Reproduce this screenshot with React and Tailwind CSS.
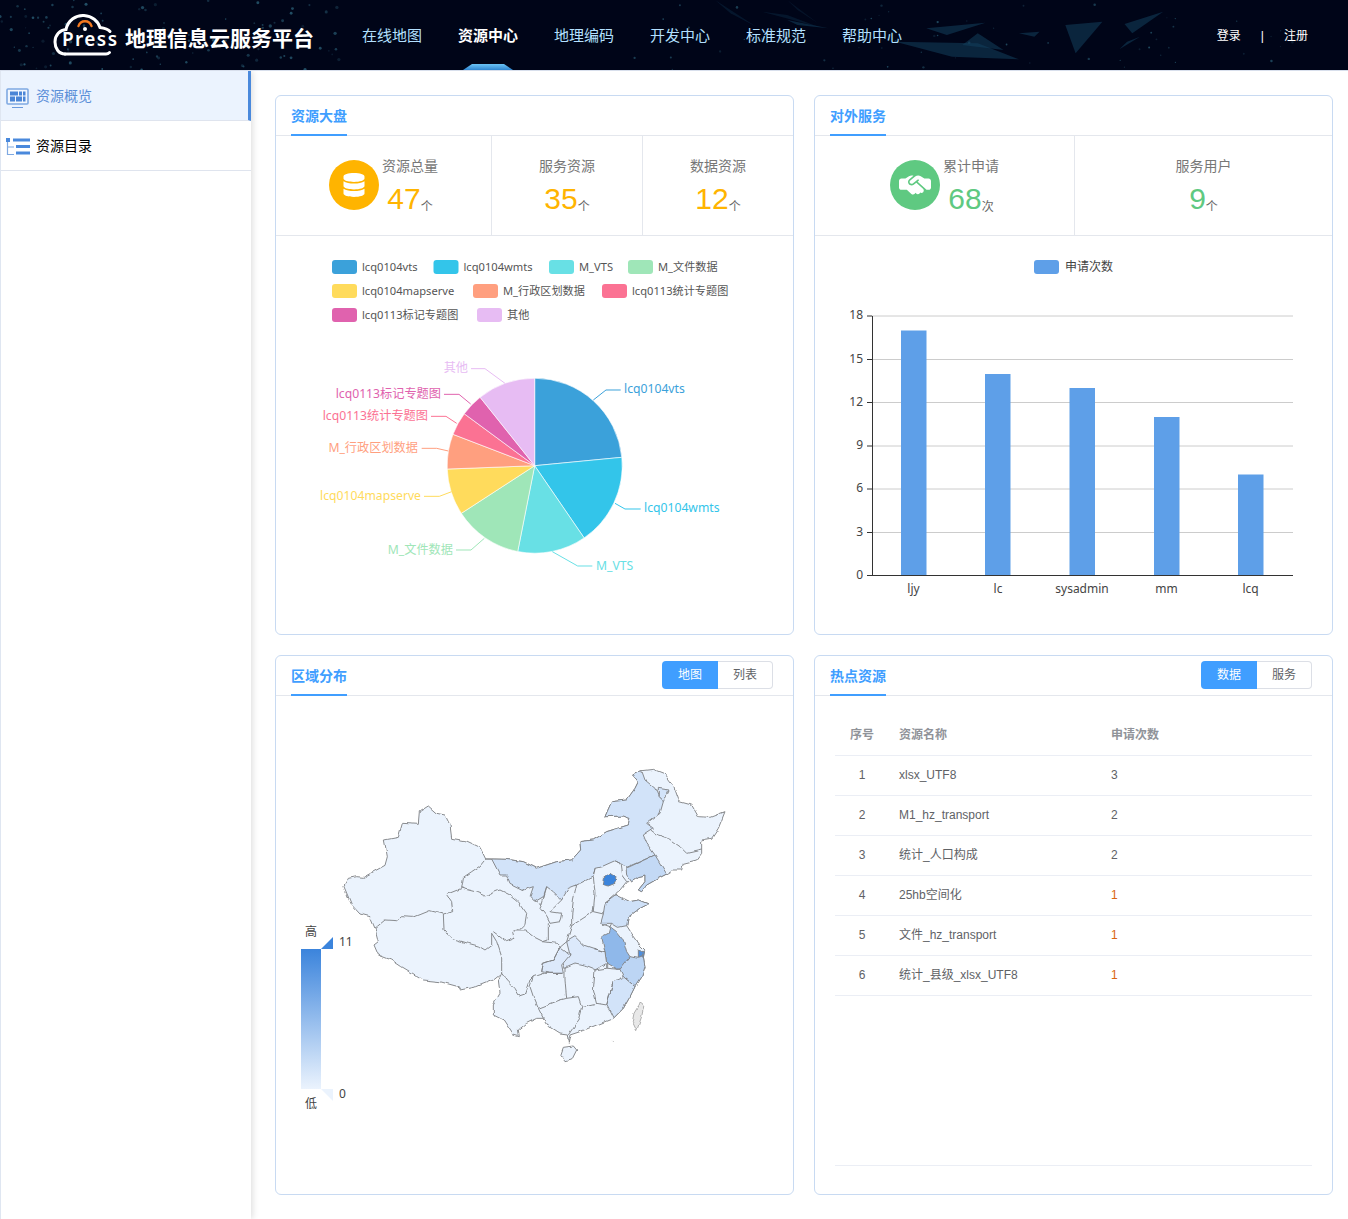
import React from 'react';
import { FaDatabase } from 'react-icons/fa';
import { FaHandshakeSimple } from 'react-icons/fa6';

const pieSlices = [
  ['lcq0104vts', '#3ba1da', 0, 84.5],
  ['lcq0104wmts', '#33c5ea', 84.5, 145.6],
  ['M_VTS', '#68e0e5', 145.6, 191.2],
  ['M_文件数据', '#9fe6b8', 191.2, 237],
  ['lcq0104mapserve', '#ffdb5c', 237, 267.8],
  ['M_行政区划数据', '#ff9f7f', 267.8, 291],
  ['lcq0113统计专题图', '#fb7293', 291, 306.4],
  ['lcq0113标记专题图', '#e062ae', 306.4, 321.4],
  ['其他', '#e7bcf3', 321.4, 360],
];

const legendItems = [
  [332, 267, 0], [433.5, 267, 1], [549, 267, 2], [628, 267, 3],
  [332, 291, 4], [473, 291, 5], [602, 291, 6],
  [332, 315, 7], [477, 315, 8],
];

const pieLabels = [
  [0, 624, 389, 'start', '880,450 918,420 962,420'],
  [1, 644, 508, 'start', '945,760 975,777 1022,777'],
  [2, 596, 566, 'start', '757,905 833,948 877,948'],
  [3, 453, 550, 'end', '553,865 513,900 468,900'],
  [4, 421, 496, 'end', '455,725 418,739 372,739'],
  [5, 418, 448, 'end', '445,603 410,595 365,595'],
  [6, 428, 416, 'end', '470,520 438,499 393,499'],
  [7, 441, 394, 'end', '512,462 477,433 432,433'],
  [8, 468, 368, 'end', '615,400 555,356 513,356'],
];

function arc(cx, cy, r, a, b) {
  const p = (d) => {
    const t = ((d - 90) * Math.PI) / 180;
    return [cx + r * Math.cos(t), cy + r * Math.sin(t)];
  };
  const [x1, y1] = p(a);
  const [x2, y2] = p(b);
  return `M${cx} ${cy}L${x1} ${y1}A${r} ${r} 0 ${b - a > 180 ? 1 : 0} 1 ${x2} ${y2}Z`;
}

function PieChart() {
  return (
    <svg viewBox="276 236 517 398" className="block h-[398px] w-[517px] [font-family:'Noto_Sans','Noto_Sans_CJK_SC',sans-serif]">
      {legendItems.map(([x, y, i]) => (
        <g key={i}>
          <rect x={x} y={y - 7} width="25" height="14" rx="3" fill={pieSlices[i][1]} />
          <text x={x + 30} y={y + 4} fontSize="11.15" fill="#555">{pieSlices[i][0]}</text>
        </g>
      ))}
      {pieSlices.map(([n, c, a, b]) => (
        <path key={n} d={arc(534.7, 465.7, 87.5, a, b)} fill={c} stroke="#fff" strokeWidth="0.6" />
      ))}
      {pieLabels.map(([i, x, y, anchor, pts]) => (
        <g key={i}>
          <g transform="translate(300 250) scale(0.33333)">
            <polyline points={pts} fill="none" stroke={pieSlices[i][1]} strokeWidth="3" />
          </g>
          <text x={x} y={y + 4} fontSize="12.2" textAnchor={anchor} fill={pieSlices[i][1]}>{pieSlices[i][0]}</text>
        </g>
      ))}
    </svg>
  );
}

const bars = [
  ['ljy', 901, 330.5, 913.5],
  ['lc', 985, 374, 998],
  ['sysadmin', 1069.5, 388, 1082],
  ['mm', 1154, 417, 1166.5],
  ['lcq', 1238, 474.5, 1250.5],
];
const yTicks = [[18, 316], [15, 359.5], [12, 402.5], [9, 446], [6, 489], [3, 532.5]];

function BarChart() {
  return (
    <svg viewBox="815 236 517 398" className="block h-[398px] w-[517px] [font-family:'Noto_Sans','Noto_Sans_CJK_SC',sans-serif]">
      <rect x="1034" y="260" width="25" height="14" rx="3" fill="#5e9fe8" />
      <text x="1065" y="271" fontSize="12" fill="#444">申请次数</text>
      {yTicks.map(([v, y]) => (
        <g key={v}>
          <line x1="872" x2="1293" y1={y} y2={y} stroke="#ccc" />
          <line x1="867" x2="872" y1={y} y2={y} stroke="#333" />
          <text x="863" y={y + 3} fontSize="12" textAnchor="end" fill="#444">{v}</text>
        </g>
      ))}
      {bars.map(([n, x, top, c]) => (
        <g key={n}>
          <rect x={x} y={top} width="25.5" height={575 - top} fill="#5e9fe8" />
          <text x={c} y="593" fontSize="12" textAnchor="middle" fill="#444">{n}</text>
        </g>
      ))}
      <line x1="872.5" x2="872.5" y1="316" y2="575" stroke="#333" />
      <line x1="867" x2="1293" y1="575.5" y2="575.5" stroke="#333" />
      <text x="863" y="579" fontSize="12" textAnchor="end" fill="#444">0</text>
    </svg>
  );
}

const country = '42,380 55,355 80,350 100,352 165,316 172,290 163,240 205,232 218,187 265,190 268,155 295,138 320,160 345,165 360,195 365,235 410,243 450,262 467,297 530,298 580,305 620,325 680,305 725,300 752,270 750,245 790,240 830,215 895,195 900,175 880,168 825,170 845,125 890,120 915,85 925,65 908,45 935,32 970,28 1005,42 1030,75 1048,125 1085,135 1105,170 1140,172 1185,155 1165,205 1145,235 1115,240 1115,280 1100,300 1060,310 1055,330 1030,330 1010,342 985,355 950,375 935,395 925,390 945,365 945,345 925,350 905,365 890,365 870,390 858,400 865,415 900,425 925,420 955,432 930,445 895,470 890,497 905,520 930,555 945,570 940,590 945,620 935,650 915,680 900,710 880,745 850,775 800,795 750,815 720,825 715,850 712,825 690,822 655,800 640,775 620,775 590,790 565,810 568,830 550,825 520,780 490,765 490,735 510,700 505,660 515,640 490,660 440,680 390,690 385,680 330,665 280,660 240,635 215,620 185,600 145,585 132,555 145,545 135,505 120,470 90,462 65,435';

const regions = [
  ['485,297 530,298 580,305 620,325 680,305 725,300 752,270 750,245 790,240 830,215 895,195 900,175 880,168 825,170 845,125 890,120 915,85 925,65 908,45 935,32 945,60 975,85 985,110 1000,125 990,160 950,190 970,205 940,225 950,250 975,285 890,322 870,310 855,302 815,320 795,325 790,350 740,375 715,385 695,420 670,395 650,380 640,410 615,425 600,410 610,380 580,390 540,370 530,345 510,345', '#d2e3f9'],
  ['985,85 1017,90 1000,125 985,110', '#d2e3f9'],
  ['975,285 1010,342 985,355 950,375 935,395 925,390 945,365 945,345 925,350 905,365 890,345 888,325', '#c3d9f5'],
  ['840,340 858,352 855,370 835,378 820,375 823,352', '#3b84dc'],
  ['820,462 825,430 860,405 900,425 925,420 955,432 930,445 895,470 890,497 865,502 845,490 812,490', '#cfe1f8'],
  ['840,500 860,515 880,540 890,575 900,590 880,625 860,628 830,610 825,575 815,530 835,520', '#8fb8ea'],
  ['925,570 943,575 940,595 925,595', '#4f8fdd'],
  ['900,590 925,595 940,590 945,620 935,650 915,680 880,650 870,628', '#bcd5f4'],
  ['880,650 915,680 900,710 880,745 850,775 830,735 850,665', '#d2e3f9'],
  ['710,545 735,530 760,555 790,565 825,575 830,610 795,630 770,620 735,612 705,625 695,600 720,585', '#dce9fb'],
  ['690,562 720,585 695,615 700,640 660,640 635,635 640,610 670,600', '#dce9fb'],
];

const borders = [
  '135,505 165,480 200,482 215,470 250,472 300,452 340,462',
  '340,462 368,455 365,425 350,403 395,385 400,352 425,335 450,318 467,297 485,297',
  '340,462 342,510 365,535 415,550 445,558 465,570 485,555 485,520',
  '485,520 500,545 515,590 515,640',
  '395,385 435,395 465,408 510,390 540,405 565,425 590,460 585,490 570,505 550,510 555,535 530,545 490,515',
  '965,210 985,225 1015,235 1050,260 1070,280 1115,270',
  '795,325 790,350 795,400 790,455',
  '790,455 820,462',
  '825,430 858,402',
  '855,302 870,310 875,345 890,365',
  '740,375 730,420 725,465 725,497',
  '725,497 790,455',
  '812,490 840,500',
  '845,490 840,500',
  '825,575 790,565',
  '830,610 830,625 795,630',
  '870,628 830,625',
  '850,665 830,735 800,730 790,690 795,630',
  '705,625 705,660 710,715 745,710 755,740 800,730',
  '640,640 700,640',
  '640,640 610,650 600,680 610,710 625,745 640,775',
  '625,745 690,720 710,715',
  '755,740 745,780 715,825',
  '515,640 530,660 555,685 570,710 585,705 600,660 610,650',
  '555,510 585,510 610,530 640,545 680,550 690,562',
  '612,425 635,435 650,380',
  '635,435 630,445 650,470 660,490 690,485 695,460 660,455 695,420',
  '655,490 655,540 640,545',
  '690,562 710,545 725,497',
  '635,635 640,610 670,600 690,562',
];

function MapChart() {
  return (
    <svg viewBox="276 696 517 498" className="block h-[498px] w-[517px] [font-family:'Noto_Sans','Noto_Sans_CJK_SC',sans-serif]">
      <defs>
        <linearGradient id="vm" x1="0" x2="0" y1="0" y2="1">
          <stop offset="0" stopColor="#3b84dc" />
          <stop offset="1" stopColor="#ebf3fd" />
        </linearGradient>
        <filter id="rough" x="-5%" y="-5%" width="110%" height="110%" colorInterpolationFilters="sRGB">
          <feTurbulence type="fractalNoise" baseFrequency="0.035" numOctaves="2" seed="4" result="n" />
          <feDisplacementMap in="SourceGraphic" in2="n" scale="12" xChannelSelector="R" yChannelSelector="G" />
        </filter>
      </defs>
      <g transform="translate(330 760) scale(0.33333)" stroke="#808285" strokeWidth="2.8" strokeLinejoin="round" filter="url(#rough)">
        <polygon points={country} fill="#ebf3fd" />
        {regions.map(([p, c], i) => <polygon key={i} points={p} fill={c} />)}
        {borders.map((p, i) => <polyline key={i} points={p} fill="none" />)}
        <polygon points="700,862 730,858 740,870 725,900 705,905 692,885" fill="#ebf3fd" />
        <polygon points="930,730 942,735 935,770 920,812 907,785 912,760" fill="#e8e8e8" stroke="#aaa" />
        <circle cx="847" cy="843" r="1.5" fill="#777" stroke="none" />
      </g>
      <rect x="301" y="949" width="20" height="140" fill="url(#vm)" />
      <polygon points="321,949 333,949 333,937" fill="#3b84dc" />
      <polygon points="321,1089 333,1089 333,1101" fill="#ebf3fd" />
      <text x="311" y="936" fontSize="12" textAnchor="middle" fill="#444">高</text>
      <text x="311" y="1108" fontSize="12" textAnchor="middle" fill="#444">低</text>
      <text x="339" y="946" fontSize="12" fill="#444">11</text>
      <text x="339" y="1098" fontSize="12" fill="#444">0</text>
    </svg>
  );
}

const dots = (() => {
  let s = 17;
  const r = () => { s = (s * 16807) % 2147483647; return s / 2147483647; };
  const out = [];
  for (let i = 0; i < 110; i++) out.push([r() * 340, r() * 70, 0.6 + r() * 1.1, 0.15 + r() * 0.4]);
  for (let i = 0; i < 60; i++) out.push([600 + r() * 700, r() * 70, 0.5 + r() * 0.8, 0.15 + r() * 0.35]);
  return out;
})();

function HeaderBackdrop() {
  return (
    <svg className="absolute inset-0 h-[70px] w-[1348px]" viewBox="0 0 1348 70">
      {dots.map(([x, y, r, o], i) => <circle key={i} cx={x} cy={y} r={r} fill="#3f8fa8" opacity={o} />)}
      <g transform="translate(540 0) scale(0.515 0.33333)" fill="#12405c" fillOpacity="0.55">
        <polygon points="1020,75 1092,65 1040,160" />
        <polygon points="1135,72 1210,35 1150,100" />
        <polygon points="1125,148 1165,110 1140,125" />
        <polygon points="750,85 865,68 790,105" />
        <polygon points="690,125 850,130 930,178 800,170" />
        <polygon points="850,100 900,150 820,135" />
        <polygon points="480,60 560,85 500,75" />
        <polygon points="430,35 480,45 540,80" fillOpacity="0.3" />
        <polygon points="340,0 420,80 370,40" fillOpacity="0.3" />
        <polygon points="480,0 540,70 500,30" fillOpacity="0.25" />
        <polygon points="930,100 970,95 960,110" />
      </g>
    </svg>
  );
}

function Logo() {
  return (
    <div className="relative h-[44px] w-[66px]">
      <svg viewBox="0 0 66 44" className="absolute inset-0 h-[44px] w-[66px]">
        <path d="M12 41C5.500 41 2 35 2 29C2 22 7 17 13 16.500C15 7 23 2 31 2.500C39 3 45 8 47 14.500C51 15 55 16 57 18.500" fill="none" stroke="#fff" strokeWidth="3" strokeLinecap="round" />
        <path d="M12 41H53C54.500 41 55.500 40.500 56.500 39.500" fill="none" stroke="#fff" strokeWidth="3" strokeLinecap="round" />
        <path d="M25.500 13C26.500 9.800 29 8.200 32 8.200C35 8.200 37.500 9.800 38.500 13" fill="none" stroke="#f47a20" strokeWidth="2.400" strokeLinecap="round" />
        <circle cx="32" cy="16" r="2" fill="#fff" />
      </svg>
      <span className="absolute left-[9px] top-[14px] text-[19px] font-semibold leading-[24px] tracking-[1.4px] text-white [font-family:'Noto_Sans',sans-serif]">Press</span>
    </div>
  );
}

function CardTitle({ children }) {
  return (
    <div className="flex h-[40px] items-stretch justify-between border-b border-[#e4e7ed] pl-[15px]">
      <div className="-mb-px flex items-center border-b-2 border-[#409eff] pt-[2px] text-[14px] font-bold text-[#409eff]">{children}</div>
    </div>
  );
}

function Toggle({ a, b }) {
  return (
    <div className="mr-[20px] mt-[5px] flex h-[28px] text-[12px]">
      <div className="flex w-[56px] items-center justify-center rounded-l-[4px] bg-[#409eff] text-white">{a}</div>
      <div className="flex w-[55px] items-center justify-center rounded-r-[4px] border border-l-0 border-[#dcdfe6] text-[#606266]">{b}</div>
    </div>
  );
}

function TitleWithToggle({ title, a, b }) {
  return (
    <div className="flex h-[40px] items-start justify-between border-b border-[#e4e7ed] pl-[15px]">
      <div className="flex h-[40px] items-center border-b-2 border-[#409eff] pt-[2px] text-[14px] font-bold text-[#409eff]">{title}</div>
      <Toggle a={a} b={b} />
    </div>
  );
}

function Stat({ icon, iconBg, label, value, unit, color, className }) {
  return (
    <div className={`flex items-center justify-center ${className}`}>
      {icon && (
        <div className={`-mt-px mr-[3px] flex h-[50px] w-[50px] items-center justify-center rounded-full text-white ${iconBg}`}>{icon}</div>
      )}
      <div className="flex h-[60px] flex-col items-center">
        <div className="text-[14px] leading-[20px] text-[#777]">{label}</div>
        <div className="mt-[3px] flex items-baseline">
          <span className={`text-[30px] leading-[40px] ${color}`}>{value}</span>
          <span className="relative top-[2px] text-[12px] text-[#666]">{unit}</span>
        </div>
      </div>
    </div>
  );
}

const rows = [
  ['1', 'xlsx_UTF8', '3', false],
  ['2', 'M1_hz_transport', '2', false],
  ['3', '统计_人口构成', '2', false],
  ['4', '25hb空间化', '1', true],
  ['5', '文件_hz_transport', '1', true],
  ['6', '统计_县级_xlsx_UTF8', '1', true],
];

export default function App() {
  const card = 'h-[540px] overflow-hidden rounded-[6px] border border-[#c8daf2] bg-white';
  return (
    <div className="min-h-[1219px] bg-white [font-family:'Liberation_Sans','Noto_Sans_CJK_SC',sans-serif]">
      <header className="relative flex h-[71px] items-center overflow-hidden border-b border-[#d8dfec] bg-[#000518]">
        <HeaderBackdrop />
        <div className="relative flex w-full items-center pl-[53px] pr-[40px]">
          <Logo />
          <div className="ml-[6px] mt-[8px] text-[21px] font-bold leading-[30px] text-white">地理信息云服务平台</div>
          <nav className="ml-[48px] mt-[2px] flex gap-[36px] text-[15px] text-[#b3e0ff]">
            <span>在线地图</span>
            <span className="font-bold text-white">资源中心</span>
            <span>地理编码</span>
            <span>开发中心</span>
            <span>标准规范</span>
            <span>帮助中心</span>
          </nav>
          <div className="ml-auto mt-[2px] flex items-center text-[12px] text-white">
            <span>登录</span>
            <span className="mx-[20px]">|</span>
            <span>注册</span>
          </div>
        </div>
        <div className="absolute bottom-0 left-[463px] h-[6px] w-[50px] bg-gradient-to-b from-[#6bc4f5] to-[#2f86d0] [clip-path:polygon(18%_0,82%_0,100%_100%,0_100%)]" />
      </header>
      <div className="flex">
        <aside className="min-h-[1148px] w-[251px] shrink-0 border-l border-[#dfe6f1] shadow-[2px_0_6px_rgba(0,0,0,0.12)]">
          <div className="flex h-[50px] items-center gap-[7px] border-b border-r-[3px] border-b-[#dfe4ee] border-r-[#4a89dc] bg-[#ebf3fe] pl-[5px] pt-px text-[14px] text-[#5b8fd8]">
            <svg width="23" height="20" viewBox="0 0 23 20" className="mt-[3px]">
              <rect x="1" y="1" width="21" height="15" rx="1" fill="#f2f7fe" stroke="#7fa9e2" strokeWidth="1.6" />
              <path d="M4 3.500h8v4H4zM13 3.500h3v4h-3zM17 3.500h2.500v4H17zM4 8.500h5v5H4zM10 8.500h6v5h-6zM17 8.500h2.500v5H17z" fill="#4a85d6" />
              <rect x="6" y="19" width="11" height="1" fill="#6b9ade" />
            </svg>
            <span>资源概览</span>
          </div>
          <div className="flex h-[50px] items-center gap-[6px] border-b border-[#dfe4ee] pl-[5px] pt-px text-[14px] text-black">
            <svg width="24" height="17" viewBox="0 0 24 17" className="mt-px">
              <rect x="0" y="0" width="4" height="4" fill="#4a89dc" />
              <path d="M1.500 4v12.500H8M1.500 9H8" fill="none" stroke="#7fa9e2" strokeWidth="1.2" />
              <rect x="7" y="0.500" width="17" height="3" fill="#4a89dc" />
              <rect x="10" y="7" width="14" height="3" fill="#4a89dc" />
              <rect x="10" y="13.500" width="14" height="3" fill="#4a89dc" />
            </svg>
            <span>资源目录</span>
          </div>
        </aside>
        <main className="grid w-[1082px] grid-cols-[519px_519px] content-start gap-[20px] pl-[24px] pt-[24px]">
          <section className={card}>
            <CardTitle>资源大盘</CardTitle>
            <div className="flex h-[100px] border-b border-[#e4e7ed]">
              <Stat className="w-[216px] border-r border-[#e4e7ed]" icon={<FaDatabase size={24} />} iconBg="bg-[#ffb400]" label="资源总量" value="47" unit="个" color="text-[#ffb400]" />
              <Stat className="w-[151px] border-r border-[#e4e7ed]" label="服务资源" value="35" unit="个" color="text-[#ffb400]" />
              <Stat className="flex-1" label="数据资源" value="12" unit="个" color="text-[#ffb400]" />
            </div>
            <PieChart />
          </section>
          <section className={card}>
            <CardTitle>对外服务</CardTitle>
            <div className="flex h-[100px] border-b border-[#e4e7ed]">
              <Stat className="w-[260px] border-r border-[#e4e7ed]" icon={<FaHandshakeSimple size={32} />} iconBg="bg-[#5fc981]" label="累计申请" value="68" unit="次" color="text-[#5fc981]" />
              <Stat className="flex-1" label="服务用户" value="9" unit="个" color="text-[#5fc981]" />
            </div>
            <BarChart />
          </section>
          <section className={card}>
            <TitleWithToggle title="区域分布" a="地图" b="列表" />
            <MapChart />
          </section>
          <section className={card}>
            <TitleWithToggle title="热点资源" a="数据" b="服务" />
            <div className="mx-[20px] mt-[19px] h-[451px] border-b border-[#ebeef5] text-[12px] text-[#606266]">
              <div className="flex h-[41px] items-center border-b border-[#ebeef5] font-bold text-[#909399]">
                <div className="w-[54px] text-center">序号</div>
                <div className="w-[212px] pl-[10px]">资源名称</div>
                <div className="pl-[10px]">申请次数</div>
              </div>
              {rows.map(([n, name, c, hot]) => (
                <div key={n} className="flex h-[40px] items-center border-b border-[#ebeef5] pb-[2px]">
                  <div className="w-[54px] text-center">{n}</div>
                  <div className="w-[212px] pl-[10px]">{name}</div>
                  <div className={`pl-[10px] ${hot ? 'text-[#d9660f]' : ''}`}>{c}</div>
                </div>
              ))}
            </div>
          </section>
        </main>
      </div>
    </div>
  );
}
